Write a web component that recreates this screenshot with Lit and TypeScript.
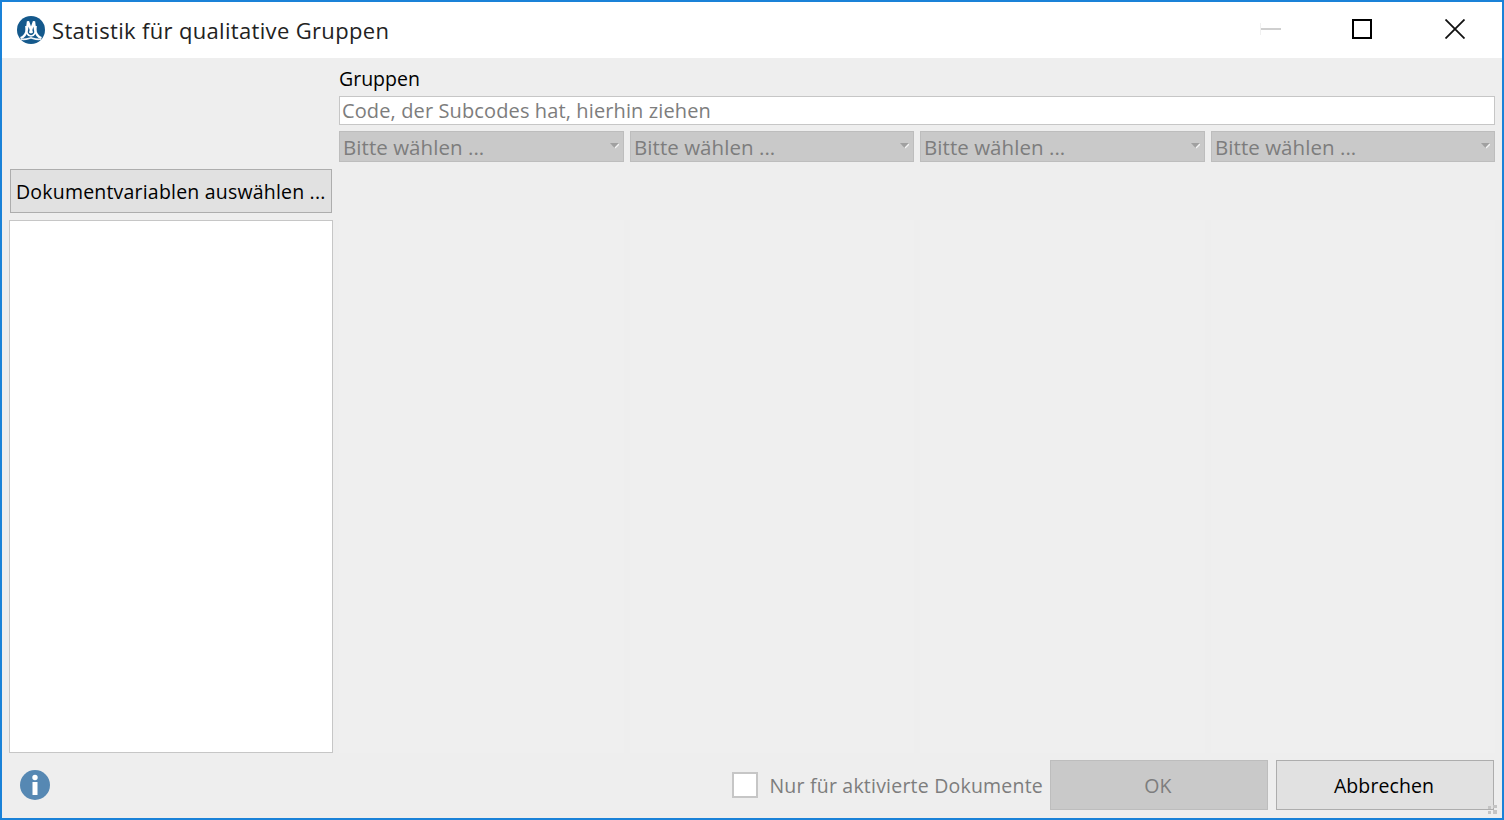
import { LitElement, html, css, svg } from "lit";
import { customElement } from "lit/decorators.js";

const FONT = css`"Open Sans", "Noto Sans", sans-serif`;

@customElement("app-root")
export class AppRoot extends LitElement {
  static styles = css`
    :host { display: block; width: 1504px; height: 820px; font-family: ${FONT}; }
    * { box-sizing: border-box; }
    .win { width: 1504px; height: 820px; border: 2px solid #1a82d8; background: #eee; display: flex; flex-direction: column; overflow: hidden; position: relative; }
    .title { height: 56px; flex: none; background: #fff; display: flex; align-items: center; padding-left: 15px; }
    .logo { width: 28px; height: 28px; flex: none; margin-top: -1px; }
    .title h1 { margin: 0 0 0 7px; font-size: 22px; letter-spacing: 0.33px; font-weight: 400; color: #222; white-space: nowrap; flex: 1; }
    .ctl { display: flex; align-items: center; flex: none; margin-top: -2px; }
    .ctl svg { display: block; }
    .min { margin-right: 71px; }
    .max { margin-right: 73px; }
    .cls { margin-right: 37px; }
    .main { flex: 1; display: grid; grid-template-columns: 324px 1fr; column-gap: 6px; padding: 0 7px; min-height: 0; }
    .left { display: flex; flex-direction: column; }
    .pick { margin: 111px 1px 7px; height: 44px; background: #e1e1e1; border: 1px solid #adadad; font: inherit; font-size: 19.5px; letter-spacing: 0.2px; color: #000; padding: 0 5px; text-align: left; white-space: nowrap; }
    .list { flex: none; height: 533px; background: #fff; border: 1px solid #c6c6c6; }
    .right { display: flex; flex-direction: column; }
    .lbl { height: 38px; display: flex; align-items: center; font-size: 19.5px; color: #000; padding-top: 2px; }
    .drop { height: 29px; background: #fff; border: 1px solid #c6c6c6; color: #7d7d7d; font-size: 20px; letter-spacing: 0.12px; display: flex; align-items: center; padding-left: 2px; white-space: nowrap; }
    .selects, .cols { display: grid; grid-template-columns: 285px 284px 285px 284px; column-gap: 6px; }
    .selects { margin-top: 6px; height: 31px; }
    .sel { background: #c9c9c9; border: 1px solid #bdbdbd; color: #7d7d7d; font-size: 20.5px; letter-spacing: 0.05px; display: flex; align-items: center; justify-content: space-between; padding: 1px 4px 0 3px; white-space: nowrap; }
    .arrow { display: block; flex: none; margin-top: -2px; }
    .cols { margin-top: 58px; height: 533px; }
    .col { background: #efefef; }
    .foot { height: 65px; flex: none; display: flex; align-items: flex-start; padding: 7px 8px 0 17px; }
    .info { width: 32px; height: 32px; margin-top: 9px; flex: none; }
    .spacer { flex: 1; }
    .check { display: flex; align-items: center; height: 50px; color: #7d7d7d; font-size: 19.5px; letter-spacing: 0.21px; white-space: nowrap; margin-right: 7px; }
    .box { width: 26px; height: 26px; background: #fff; border: 2px solid #c6c6c6; margin-right: 11px; }
    .btn { width: 218px; height: 50px; font: inherit; font-size: 19.5px; letter-spacing: 0.1px; border: 1px solid #adadad; background: #e1e1e1; color: #000; padding: 0 2px 0 0; }
    .btn.off { background: #c9c9c9; border-color: #bdbdbd; color: #7d7d7d; margin-right: 8px; }
    .grip { position: absolute; right: 5px; bottom: 4px; width: 9px; height: 9px; }
  `;

  private logo() {
    return html`<svg class="logo" viewBox="0 0 28 28">
      <circle cx="14" cy="14" r="14" fill="#14598c"></circle>
      <path d="M3.500 22c4-1 5.500-3.500 6.500-8.500L11 5.500 15 17" fill="none" stroke="#fff" stroke-width="2.300"></path>
      <path d="M24.500 22c-4-1-5.500-3.500-6.500-8.500L17 5.500 13 17" fill="none" stroke="#fff" stroke-width="2.300"></path>
      <path d="M9 10c0 7 1.500 10 5 10s5-3 5-10" fill="none" stroke="#fff" stroke-width="1.700"></path>
      <path d="M4 23c3 1.200 6 0 10-1.200 4 1.200 7 2.400 10 1.200" fill="none" stroke="#eef3f7" stroke-width="1.700"></path>
    </svg>`;
  }

  private arrow() {
    return svg`<svg class="arrow" width="9" height="6" viewBox="0 0 9 6"><path d="M0 0h9L4.500 5z" fill="#a0a0a0"></path><path d="M5 5l4-4" stroke="#f4f4f4" stroke-width="1.300"></path></svg>`;
  }

  render() {
    const sel = [0, 1, 2, 3];
    return html`<div class="win">
      <header class="title">
        ${this.logo()}
        <h1>Statistik für qualitative Gruppen</h1>
        <div class="ctl">
          <svg class="min" width="21" height="12" viewBox="0 0 21 12"><path d="M0.500 0v12" stroke="#f0f0f0"></path><path d="M1 6h20" stroke="#cfcfcf" stroke-width="2"></path></svg>
          <svg class="max" width="20" height="20" viewBox="0 0 20 20"><rect x="1" y="1" width="18" height="18" fill="none" stroke="#000" stroke-width="2"></rect></svg>
          <svg class="cls" width="20" height="20" viewBox="0 0 20 20"><path d="M0.500 0.500l19 19M19.500 0.500l-19 19" stroke="#111" stroke-width="1.800"></path></svg>
        </div>
      </header>
      <div class="main">
        <div class="left">
          <button class="pick">Dokumentvariablen auswählen ...</button>
          <div class="list"></div>
        </div>
        <div class="right">
          <div class="lbl">Gruppen</div>
          <div class="drop">Code, der Subcodes hat, hierhin ziehen</div>
          <div class="selects">
            ${sel.map(() => html`<div class="sel"><span>Bitte wählen ...</span>${this.arrow()}</div>`)}
          </div>
          <div class="cols">${sel.map(() => html`<div class="col"></div>`)}</div>
        </div>
      </div>
      <footer class="foot">
        <svg class="info" viewBox="0 0 32 32">
          <circle cx="16" cy="16" r="15" fill="#5688b3"></circle>
          <circle cx="16" cy="8.500" r="2.700" fill="#fff"></circle>
          <rect x="13.500" y="13" width="5" height="13" fill="#fff"></rect>
        </svg>
        <div class="spacer"></div>
        <label class="check"><span class="box"></span>Nur für aktivierte Dokumente</label>
        <button class="btn off">OK</button>
        <button class="btn">Abbrechen</button>
      </footer>
      <svg class="grip" viewBox="0 0 9 9"><path d="M5 0h4v3H5zM0 1h3v3H0zM0 6h3v3H0zM5 5h4v4H5z" fill="#c4c4c4"></path></svg>
    </div>`;
  }
}
